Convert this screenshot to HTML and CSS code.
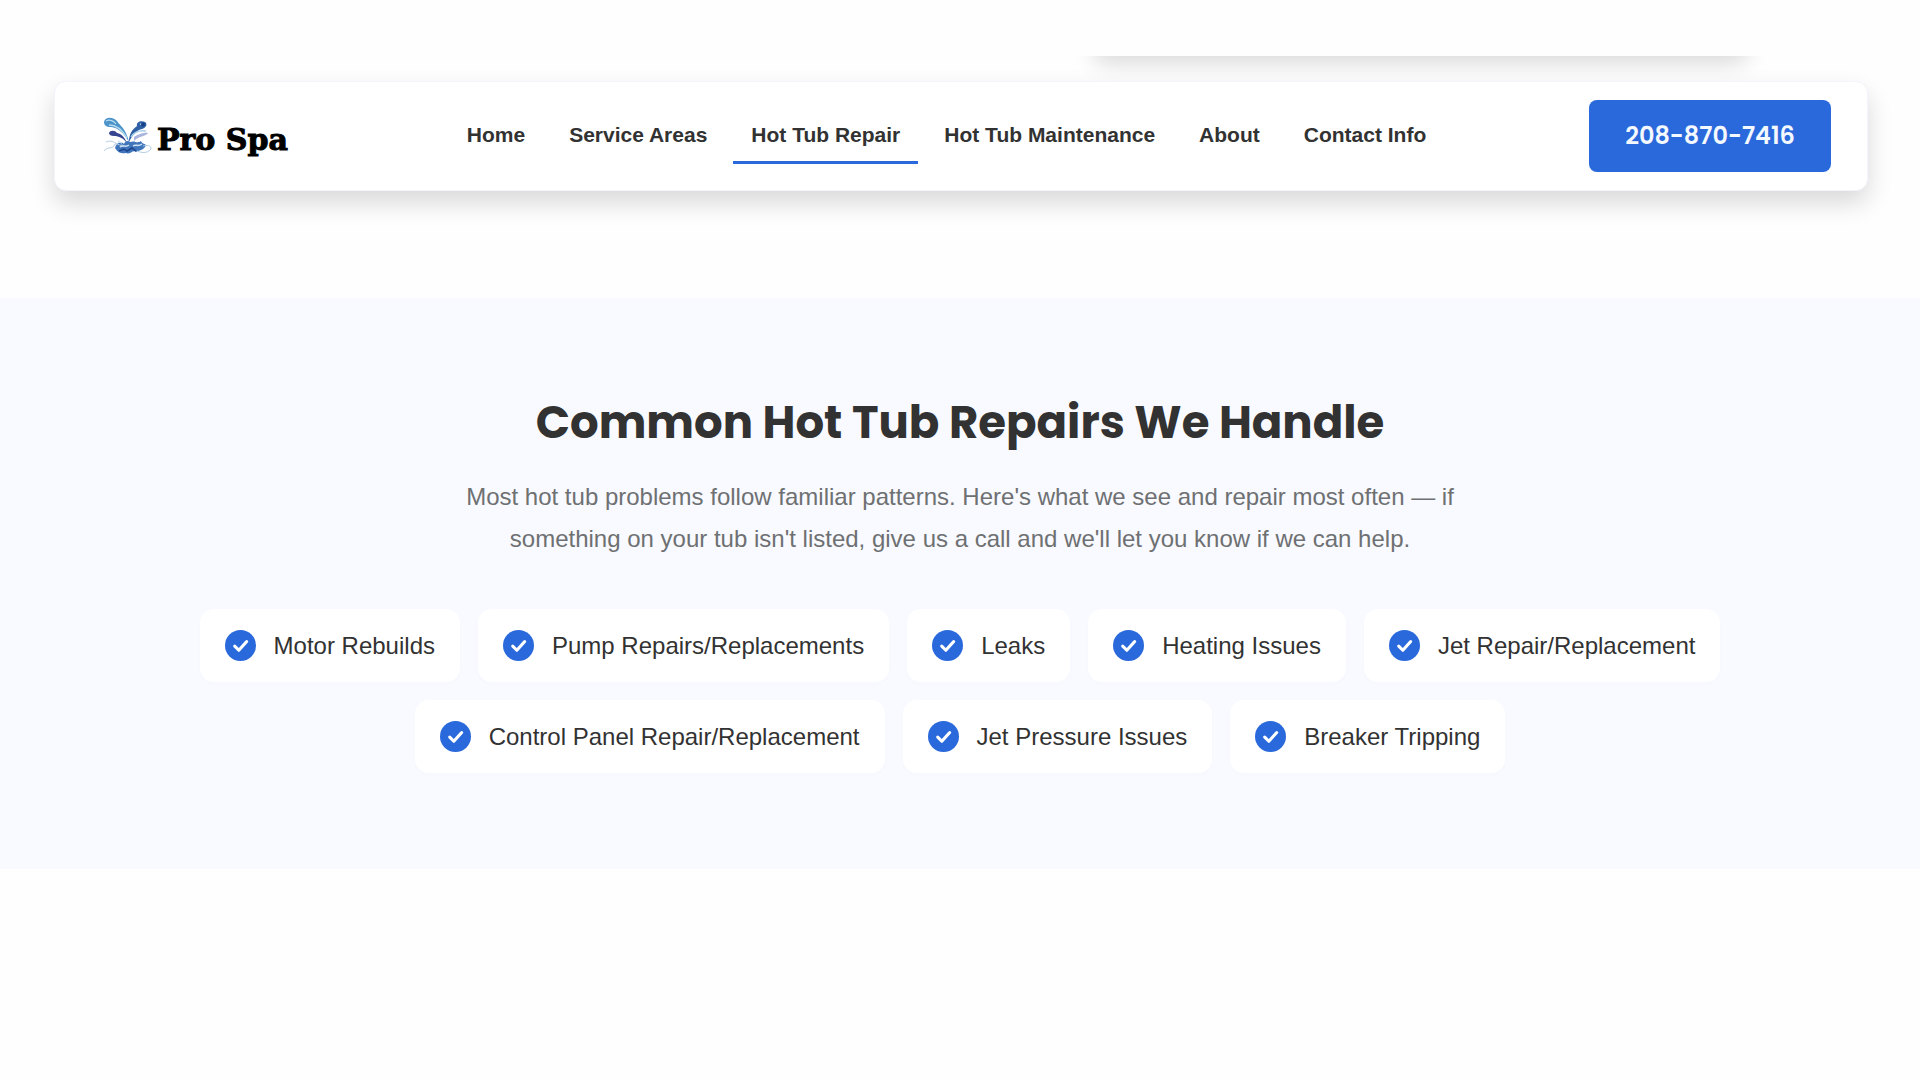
FILE: index.html
```
<!DOCTYPE html>
<html lang="en">
<head>
    <meta charset="UTF-8">
    <meta name="viewport" content="width=device-width, initial-scale=1.0">
    <title>Hot Tub Repair | Pro Spa</title>
    <link rel="stylesheet" href="styles.css">
</head>
<body>
    <svg class="sprite" aria-hidden="true">
        <symbol id="check" viewBox="0 0 30 30">
            <circle cx="15" cy="15" r="15" fill="#2a69db"/>
            <path d="M9.4 15.6l4 4 7.6-8.4" fill="none" stroke="#fff" stroke-width="3" stroke-linecap="round" stroke-linejoin="round"/>
        </symbol>
    </svg>

    <div class="card-strip">
        <div class="card-tail"></div>
    </div>

    <header class="header">
        <a class="logo" href="#">
            <svg class="splash" viewBox="0 0 50 38" aria-hidden="true">
                <path d="M1 5C2-1 11 0 14 4c2 4 9 7 12 21C20 15 15 11 8 10 3 10 1 8 1 5z" fill="#4c93c9"/>
                <path d="M3 4c4-2 8 0 10 3M6 8c8 0 14 6 18 13" fill="none" stroke="#b4dcf0" stroke-width="1.3"/>
                <path d="M26 25C26 16 30 12 34 9c-1-4 4-6 8-4 3 2 1 6-3 7-5 1-9 5-13 13z" fill="#2f5fa5"/>
                <path d="M37 7l4 1M28 20c3-5 8-7 15-6" fill="none" stroke="#a8cfe9" stroke-width="1.3"/>
                <circle cx="40" cy="7.5" r="2" fill="#173f86"/>
                <path d="M6 16c1-3 6-3 8 0 5 1 8 5 10 10-4-5-8-7-13-7-3 0-5-1-5-3z" fill="#35458f"/>
                <path d="M31 20c3-2 10-5 14-4-1 3-9 3-14 8z" fill="#a9b5dc"/>
                <path d="M12 31c1-5 6-7 9-4 1-3 4-4 6-2 5-2 7 2 11-1 1 3 3 2 5 4-2 5-6 5-10 7-3-3-6 3-10 1-4 1-8 0-11-5z" fill="#3f75bb"/>
                <path d="M15 24l4 2M17 30c3-3 5 1 9-2M30 29c3-2 5 1 9-2" fill="none" stroke="#cfe2f4" stroke-width="1.5"/>
                <path d="M1 34c3-5 9-1 11-7 4 0 5 2 8 1M3 25c5-2 8 0 11 2M34 34c7 3 12 1 14-2 0-4-4-4-8-3" fill="none" stroke="#b3cde6" stroke-width="1"/>
                <path d="M16 34l5-2 3 2 5-3 4 3" fill="none" stroke="#1d438c" stroke-width="1.5"/>
            </svg>
            <span class="logo-text">Pro Spa</span>
        </a>
        <nav class="nav">
            <a href="#">Home</a>
            <a href="#">Service Areas</a>
            <a class="active" href="#">Hot Tub Repair</a>
            <a href="#">Hot Tub Maintenance</a>
            <a href="#">About</a>
            <a href="#">Contact Info</a>
        </nav>
        <a class="phone" href="tel:2088707416">208-870-7416</a>
    </header>

    <main class="repairs">
        <h1>Common Hot Tub Repairs We Handle</h1>
        <p>Most hot tub problems follow familiar patterns. Here's what we see and repair most often — if something on your tub isn't listed, give us a call and we'll let you know if we can help.</p>
        <ul class="repair-list">
            <li><svg><use href="#check"/></svg>Motor Rebuilds</li>
            <li><svg><use href="#check"/></svg>Pump Repairs/Replacements</li>
            <li><svg><use href="#check"/></svg>Leaks</li>
            <li><svg><use href="#check"/></svg>Heating Issues</li>
            <li><svg><use href="#check"/></svg>Jet Repair/Replacement</li>
            <li><svg><use href="#check"/></svg>Control Panel Repair/Replacement</li>
            <li><svg><use href="#check"/></svg>Jet Pressure Issues</li>
            <li><svg><use href="#check"/></svg>Breaker Tripping</li>
        </ul>
    </main>
</body>
</html>
```
FILE: styles.css
```
* {
    box-sizing: border-box;
}
body {
    font-family: Arial, "Liberation Sans", sans-serif;
    background-color: #fefefe;
    color: #323232;
    margin: 0;
    padding-top: 56px;
}
a {
    color: inherit;
    text-decoration: none;
}
.sprite {
    display: none;
}
/* bottom shadow of the card scrolling away above the header */
.card-strip {
    height: 25px;
    overflow: hidden;
}
.card-tail {
    width: 34%;
    height: 60px;
    margin-top: -60px;
    margin-left: 57%;
    border-radius: 10px;
    box-shadow: 0 8px 22px rgba(0, 0, 0, 0.14);
}
.header {
    display: flex;
    align-items: center;
    justify-content: space-between;
    margin: 0 52px 0 54px;
    padding: 18px 36px 18px 48px;
    background-color: #fff;
    border: 1px solid #f3f4fd;
    border-radius: 12px;
    box-shadow: 0 12px 24px rgba(0, 0, 0, 0.15);
}
.logo {
    display: flex;
    align-items: center;
    gap: 4px;
    padding-right: 16px;
}
.splash {
    width: 50px;
    height: 38px;
}
.logo-text {
    padding-top: 8px;
    font-family: "Cooper Black", "DejaVu Serif", serif;
    font-size: 30px;
    font-weight: bold;
    line-height: 40px;
    color: #000;
    -webkit-text-stroke: 1px #000;
}
.nav {
    display: flex;
    gap: 8px;
}
.nav a {
    padding: 14px 18px;
    border-bottom: 3px solid transparent;
    font-size: 21px;
    font-weight: bold;
    line-height: 24px;
}
.nav .active {
    border-color: #2a69db;
}
.phone {
    padding: 18px 36px;
    border-radius: 8px;
    background-color: #2a69db;
    color: #f4f8ff;
    font-family: Poppins, Inter, sans-serif;
    font-size: 24px;
    font-weight: 600;
    line-height: 36px;
}
.repairs {
    margin-top: 107px;
    padding: 95px 190px 96px;
    background-color: #f8faff;
    text-align: center;
}
.repairs h1 {
    margin: 0 0 23px;
    font-family: Poppins, Inter, sans-serif;
    font-size: 45px;
    font-weight: bold;
    line-height: 60px;
}
.repairs p {
    max-width: 1060px;
    margin: 0 auto 49px;
    color: #6e7072;
    font-size: 24px;
    line-height: 42px;
}
.repair-list {
    display: flex;
    flex-wrap: wrap;
    justify-content: center;
    gap: 18px;
    margin: 0;
    padding: 0;
    list-style: none;
}
.repair-list li {
    display: flex;
    align-items: center;
    gap: 18px;
    padding: 18px 25px;
    border-radius: 14px;
    background-color: #fff;
    box-shadow: 0 2px 8px rgba(0, 0, 0, 0.01);
    font-size: 24px;
    line-height: 37px;
}
.repair-list svg {
    width: 31px;
    height: 31px;
}
```
